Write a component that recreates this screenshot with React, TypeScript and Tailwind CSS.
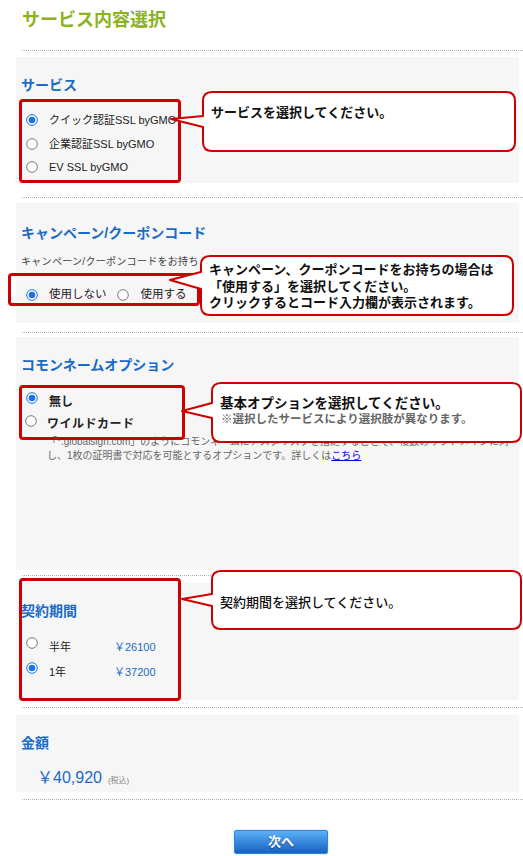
import React from "react";

const FONT = '"Liberation Sans", "Noto Sans CJK JP", sans-serif';

function Radio({ checked }: { checked?: boolean }) {
  return (
    <svg width="12" height="12" viewBox="0 0 12 12" className="shrink-0">
      <circle cx="6" cy="6" r="5.3" fill="white" stroke={checked ? "#1a73e8" : "#7a7a7a"} strokeWidth="1" />
      {checked && <circle cx="6" cy="6" r="3.3" fill="#1a73e8" />}
    </svg>
  );
}

function Dotted({ mt }: { mt: string }) {
  return <div className={`ml-[22px] border-t border-dotted border-[#b0b0b0] ${mt}`} />;
}

function Heading({ children }: { children: React.ReactNode }) {
  return <div className="pl-[5px] text-[14px] leading-[16px] font-bold text-[#1a6bc6]">{children}</div>;
}

type Bubble = { L: number; T: number; R: number; B: number; a1: number; a2: number; tx: number; ty: number };

function bubblePath(b: Bubble) {
  const r = 9;
  const { L, T, R, B, a1, a2, tx, ty } = b;
  return `M ${L + r} ${T} H ${R - r} Q ${R} ${T} ${R} ${T + r} V ${B - r} Q ${R} ${B} ${R - r} ${B} H ${L + r} Q ${L} ${B} ${L} ${B - r} V ${a2} L ${tx} ${ty} L ${L} ${a1} V ${T + r} Q ${L} ${T} ${L + r} ${T} Z`;
}

const bubbles: Bubble[] = [
  { L: 203, T: 92, R: 515, B: 151, a1: 116, a2: 127, tx: 171, ty: 119 },
  { L: 201, T: 256, R: 513, B: 315, a1: 272, a2: 289, tx: 170, ty: 280 },
  { L: 212, T: 383, R: 521, B: 442, a1: 403, a2: 418, tx: 182, ty: 411 },
  { L: 212, T: 571, R: 521, B: 629, a1: 594, a2: 606, tx: 182, ty: 599 },
];

export default function App() {
  return (
    <div className="relative w-[523px] h-[856px] overflow-hidden bg-white text-[#222]" style={{ fontFamily: FONT }}>
      <h1 className="pt-[10px] pl-[22px] text-[18px] leading-[20px] font-bold text-[#8cb31f]">サービス内容選択</h1>

      <Dotted mt="mt-[20px]" />

      {/* Panel 1 */}
      <div className="ml-[16px] mt-[6px] w-[503px] bg-[#f6f6f6] pt-[20px] pb-[5px]">
        <Heading>サービス</Heading>
        <div className="mt-[15px]">
          <div className="flex items-center h-[24px] pl-[10px] gap-[11px] text-[11px]">
            <Radio checked />
            <span>クイック認証SSL byGMO</span>
          </div>
          <div className="flex items-center h-[24px] pl-[10px] gap-[11px] text-[11px]">
            <Radio />
            <span>企業認証SSL byGMO</span>
          </div>
          <div className="flex items-center h-[22px] pl-[10px] gap-[11px] text-[11px]">
            <Radio />
            <span>EV SSL byGMO</span>
          </div>
        </div>
      </div>

      <Dotted mt="mt-[14px]" />

      {/* Panel 2 */}
      <div className="ml-[16px] mt-[5px] w-[503px] bg-[#f6f6f6] pt-[22px] pb-[17px]">
        <Heading>キャンペーン/クーポンコード</Heading>
        <div className="mt-[14px] pl-[5px] h-[14px] leading-[14px] text-[10px] tracking-[0.3px] text-[#444] whitespace-nowrap">
          キャンペーン/クーポンコードをお持ち
        </div>
        <div className="mt-[15px] flex items-center h-[22px] pl-[10px] text-[11.5px]">
          <Radio checked />
          <span className="ml-[11px]">使用しない</span>
          <span className="ml-[10px]"><Radio /></span>
          <span className="ml-[12px]">使用する</span>
        </div>
      </div>

      <Dotted mt="mt-[9px]" />

      {/* Panel 3 */}
      <div className="ml-[16px] mt-[4px] w-[503px] h-[233px] bg-[#f6f6f6] pt-[20px]">
        <Heading>コモンネームオプション</Heading>
        <div className="mt-[18px]">
          <div className="flex items-center h-[22px] pl-[10px] text-[12px] font-bold">
            <span className="-mt-[8px]"><Radio checked /></span>
            <span className="ml-[11px]">無し</span>
          </div>
          <div className="flex items-center h-[22px] pl-[9px] text-[12px] font-bold tracking-[0.5px]">
            <span className="-mt-[6px]"><Radio /></span>
            <span className="ml-[10px]">ワイルドカード</span>
          </div>
        </div>
        <div className="pl-[31px] text-[10px] leading-[14px] text-[#666]">
          <div className="whitespace-nowrap">「*.globalsign.com」のようにコモンネームにアスタリスクを指定することで、複数のサブドメインに対</div>
          <div className="whitespace-nowrap">
            し、1枚の証明書で対応を可能とするオプションです。詳しくは
            <span className="text-[#0000ee] underline">こちら</span>
          </div>
        </div>
      </div>

      <Dotted mt="mt-[5px]" />

      {/* Panel 4 */}
      <div className="ml-[16px] mt-[7px] w-[503px] bg-[#f6f6f6] pt-[20px] pb-[17px]">
        <Heading>契約期間</Heading>
        <div className="mt-[17px]">
          <div className="flex items-center h-[22px] pl-[10px] text-[11px]">
            <span className="-mt-[8px]"><Radio /></span>
            <span className="ml-[11px] w-[65px]">半年</span>
            <span className="text-[#1a6bc6] text-[11px]">￥26100</span>
          </div>
          <div className="mt-[3px] flex items-center h-[22px] pl-[10px] text-[11px]">
            <span className="-mt-[8px]"><Radio checked /></span>
            <span className="ml-[11px] w-[65px]">1年</span>
            <span className="text-[#1a6bc6] text-[11px]">￥37200</span>
          </div>
        </div>
      </div>

      <Dotted mt="mt-[7px]" />

      {/* Panel 5 */}
      <div className="ml-[16px] mt-[7px] w-[503px] bg-[#f6f6f6] pt-[20px] pb-[3px]">
        <Heading>金額</Heading>
        <div className="mt-[16px] h-[22px] pl-[21px] flex items-end">
          <span className="text-[16px] leading-[22px] text-[#1a6bc6]">￥40,920</span>
          <span className="ml-[6px] mb-[3px] text-[8px] leading-[10px] text-[#888]">(税込)</span>
        </div>
      </div>

      <Dotted mt="mt-[7px]" />

      <div className="mt-[29px] ml-[234px]">
        <button className="w-[94px] h-[24px] rounded-[2px] border border-[#2f86dc] bg-gradient-to-b from-[#5cb0f6] to-[#1461c2] text-white text-[13px] font-bold shadow-[0_0_2px_#9fd4ff] [text-shadow:0_1px_1px_rgba(0,0,0,0.45)]">
          次へ
        </button>
      </div>

      {/* Annotation red boxes */}
      <div className="absolute left-[19px] top-[99px] w-[162px] h-[84px] border-[3px] border-[#cc0000] rounded-[4px]" />
      <div className="absolute left-[8px] top-[273px] w-[192px] h-[33px] border-[3px] border-[#cc0000] rounded-[4px]" />
      <div className="absolute left-[19px] top-[385px] w-[166px] h-[55px] border-[3px] border-[#cc0000] rounded-[4px]" />
      <div className="absolute left-[19px] top-[578px] w-[162px] h-[123px] border-[3px] border-[#cc0000] rounded-[4px]" />

      {/* Callout bubbles */}
      <svg className="absolute left-0 top-0 pointer-events-none" width="523" height="856" viewBox="0 0 523 856">
        {bubbles.map((b, i) => (
          <path key={i} d={bubblePath(b)} fill="white" stroke="#cc0000" strokeWidth="2" strokeLinejoin="round" />
        ))}
      </svg>

      <div className="absolute left-[211px] top-[104px] text-[13px] leading-[18px] font-bold text-[#111] whitespace-nowrap">
        サービスを選択してください。
      </div>
      <div className="absolute left-[209px] top-[262px] text-[13px] leading-[16.5px] font-bold text-[#111] whitespace-nowrap">
        <div>キャンペーン、クーポンコードをお持ちの場合は</div>
        <div>「使用する」を選択してください。</div>
        <div>クリックするとコード入力欄が表示されます。</div>
      </div>
      <div className="absolute left-[220px] top-[395px] whitespace-nowrap font-bold">
        <div className="text-[13.5px] leading-[18px] text-[#111]">基本オプションを選択してください。</div>
        <div className="text-[11.5px] leading-[15px] text-[#666] -mt-[1px] ml-[1px]">※選択したサービスにより選択肢が異なります。</div>
      </div>
      <div className="absolute left-[220px] top-[594px] text-[13px] leading-[18px] font-medium text-[#111] whitespace-nowrap">
        契約期間を選択してください。
      </div>
    </div>
  );
}
